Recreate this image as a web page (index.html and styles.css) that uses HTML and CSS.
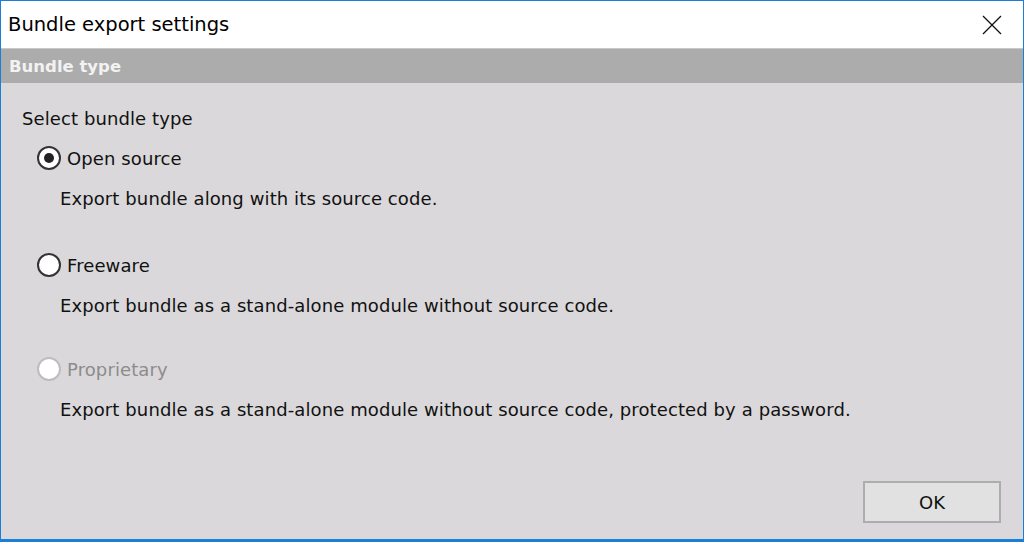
FILE: index.html
```html
<!DOCTYPE html>
<html>
<head>
<meta charset="utf-8">
<link rel="stylesheet" href="styles.css">
</head>
<body>
<div class="window">
  <div class="titlebar">
    <span class="title">Bundle export settings</span>
    <button class="close" aria-label="Close">
      <svg width="20" height="20" viewBox="0 0 20 20"><path d="M1 1 L19 19 M19 1 L1 19" stroke="#111" stroke-width="1.3" fill="none"/></svg>
    </button>
  </div>
  <div class="section-header">Bundle type</div>
  <div class="content">
    <div class="prompt">Select bundle type</div>
    <div class="option first">
      <label class="radio-row"><span class="radio checked"></span><span class="radio-label">Open source</span></label>
      <div class="desc">Export bundle along with its source code.</div>
    </div>
    <div class="option second">
      <label class="radio-row"><span class="radio"></span><span class="radio-label">Freeware</span></label>
      <div class="desc">Export bundle as a stand-alone module without source code.</div>
    </div>
    <div class="option third">
      <label class="radio-row disabled"><span class="radio"></span><span class="radio-label">Proprietary</span></label>
      <div class="desc">Export bundle as a stand-alone module without source code, protected by a password.</div>
    </div>
  </div>
  <div class="footer">
    <button class="ok">OK</button>
  </div>
</div>
</body>
</html>
```

FILE: styles.css
```css
html, body {
  margin: 0;
  padding: 0;
  width: 1024px;
  height: 542px;
  overflow: hidden;
}
body {
  font-family: "DejaVu Sans", sans-serif;
  color: #111;
}
.window {
  box-sizing: border-box;
  width: 1024px;
  height: 542px;
  border: 1px solid #1a7fd6;
  border-bottom-width: 3px;
  background: #dad8da;
  display: flex;
  flex-direction: column;
}
.titlebar {
  height: 47px;
  background: #fff;
  display: flex;
  align-items: center;
  justify-content: space-between;
  padding-left: 7px;
}
.title {
  font-size: 19.5px;
  color: #000;
}
.close {
  width: 46px;
  height: 47px;
  border: 0;
  background: transparent;
  display: flex;
  align-items: center;
  justify-content: center;
  margin-right: 8px;
  padding: 0;
}
.section-header {
  height: 34px;
  background: #acacac;
  border-top: 1px solid #c8c8c8;
  color: #f2f2f2;
  font-weight: bold;
  font-size: 16.5px;
  display: flex;
  align-items: center;
  padding-left: 8px;
}
.content {
  flex: 1;
  padding: 24px 0 0 21px;
  font-size: 18px;
  letter-spacing: 0.1px;
}
.prompt {
  height: 24px;
  line-height: 24px;
}
.option.first {
  margin-top: 14px;
}
.option.second {
  margin-top: 41px;
}
.option.third {
  margin-top: 38px;
}
.radio-row {
  display: flex;
  align-items: center;
  gap: 6px;
  margin-left: 15px;
  height: 26px;
}
.radio {
  box-sizing: border-box;
  width: 24px;
  height: 24px;
  border-radius: 50%;
  border: 2px solid #333;
  background: #fff;
  position: relative;
}
.radio.checked::after {
  content: "";
  position: absolute;
  left: 5px;
  top: 5px;
  width: 10px;
  height: 10px;
  border-radius: 50%;
  background: #222;
}
.disabled .radio {
  border-color: #bdbdbd;
}
.disabled .radio-label {
  color: #8c8c8c;
}
.desc {
  margin-top: 16px;
  margin-left: 38px;
  height: 24px;
  line-height: 24px;
}
.footer {
  display: flex;
  justify-content: flex-end;
  align-items: flex-end;
  padding: 0 22px 16px 0;
}
.ok {
  width: 138px;
  height: 42px;
  background: #e1e1e1;
  border: 2px solid #adadad;
  font-family: "DejaVu Sans", sans-serif;
  font-size: 18px;
  color: #111;
}
```
